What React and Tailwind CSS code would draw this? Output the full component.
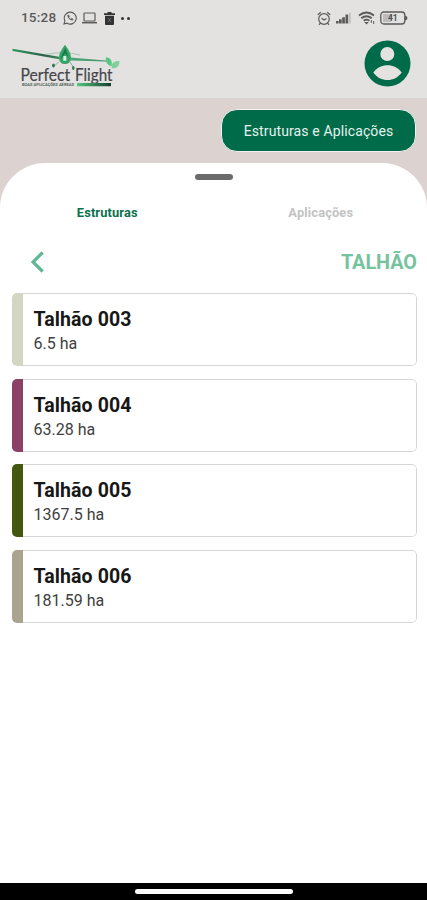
const fields = [
  { name: 'Talhão 003', area: '6.5 ha', bar: 'bg-[#d3d6c3]' },
  { name: 'Talhão 004', area: '63.28 ha', bar: 'bg-[#8b4165]' },
  { name: 'Talhão 005', area: '1367.5 ha', bar: 'bg-[#43570f]' },
  { name: 'Talhão 006', area: '181.59 ha', bar: 'bg-[#aaa390]' },
];

function StatusBar() {
  return (
    <div className="flex h-9 items-center justify-between pl-[21px] pr-[19px] text-[#5a5a5a]">
      <div className="flex items-center">
        <span className="w-[42px] text-[13.5px] font-medium leading-none tracking-[0.2px]">15:28</span>
        <svg className="h-[14px] w-[14px]" viewBox="0 0 14 14" fill="none" stroke="currentColor">
          <path d="M1 13l.9-3.2A6 6 0 1 1 4.100 12.200Z" strokeWidth="1.100" />
          <path d="M4.600 4.100c-.4 2.300 2.700 5.400 5 5.200l.6-1.200-1.600-.8-.8.7C6.900 7.600 6.200 6.900 5.900 6.200l.6-.8-.7-1.500Z" fill="currentColor" strokeWidth=".3" />
        </svg>
        <svg className="ml-[5px] h-3 w-[15px]" viewBox="0 0 15 12" fill="none" stroke="currentColor">
          <rect x="2" y="1" width="11" height="8" rx=".7" strokeWidth="1.200" />
          <path d="M0 10.700h15" strokeWidth="1.500" />
        </svg>
        <svg className="ml-[7px] h-[13px] w-[11px] text-[#333333]" viewBox="0 0 11 13" fill="currentColor">
          <path d="M3.500 0h4v1.300H11V3H0V1.300h3.500ZM1 3.800h9V12a1 1 0 0 1-1 1H2a1 1 0 0 1-1-1Z" />
          <path d="M4 6l3 4M7 6l-3 4" stroke="#777" strokeWidth=".8" />
        </svg>
        <span className="ml-[6px] h-[3px] w-[3px] rounded-full bg-[#333333]" />
        <span className="ml-[3px] h-[3px] w-[3px] rounded-full bg-[#333333]" />
      </div>
      <div className="flex items-center">
        <svg className="h-[15px] w-[14px]" viewBox="0 0 14 15" fill="none" stroke="currentColor" strokeWidth="1.200">
          <circle cx="7" cy="8" r="5.300" />
          <path d="M.8 3.700L3.800 1.200M13.200 3.700l-3-2.500M4.500 7.200L7 9l2.500-1.600M3.300 12.200l-1.200 1.600M10.700 12.200l1.200 1.600" />
        </svg>
        <svg className="ml-[5px] h-3 w-4" viewBox="0 0 16 12" fill="currentColor">
          <path d="M0 9h2.600v2.500H0ZM3 7.300h2.700v4.200H3ZM6.200 5.200h2.700v6.300H6.200ZM9.500 2.500h2.700v9H9.500Z" />
          <path d="M13.200.8h1.500v10.700h-1.500Z" opacity=".3" />
        </svg>
        <svg className="ml-[6px] h-[14px] w-[18px]" viewBox="0 0 18 14" fill="none" stroke="currentColor" strokeWidth="1.900">
          <path d="M1 4.500q7.500-6 15 0M3.300 7.200q5.200-4.100 10.400 0M5.700 9.700q2.800-2.100 5.600 0" />
          <path d="M6.200 11h4.600L8.500 13.500Z" fill="currentColor" stroke="none" />
          <path d="M13.300 9v3M15.700 10v3" strokeWidth="1" />
        </svg>
        <svg className="ml-[4px] h-[14px] w-[28px]" viewBox="0 0 28 14">
          <rect x=".8" y="1" width="24" height="12" rx="3" fill="none" stroke="currentColor" strokeWidth="1.300" />
          <rect x="3" y="3" width="8" height="8" rx="1" fill="#bcbcbc" />
          <path d="M25 4.500q2.500.5 2.500 2.500T25 9.500Z" fill="currentColor" />
          <text x="12.800" y="10.200" textAnchor="middle" fontFamily="Roboto, sans-serif" fontSize="8.500" fontWeight="700" fill="#505050">41</text>
        </svg>
      </div>
    </div>
  );
}

function Logo() {
  return (
    <svg className="h-[48px] w-[110px]" viewBox="12 42 110 48" fill="none">
      <defs>
        <linearGradient id="wing" x1="12" x2="120" y1="0" y2="0" gradientUnits="userSpaceOnUse">
          <stop stopColor="#2b9a60" />
          <stop offset=".3" stopColor="#2f6048" />
          <stop offset=".55" stopColor="#4ba879" />
          <stop offset="1" stopColor="#4a8c68" />
        </linearGradient>
        <linearGradient id="strip" x1="77" x2="111" y1="0" y2="0" gradientUnits="userSpaceOnUse">
          <stop stopColor="#55c783" />
          <stop offset="1" stopColor="#143f2d" />
        </linearGradient>
      </defs>
      <path d="M12.500 48.800L59 56.700l11 .8 36 2.900v1.200L71 60.600 58 59 12.600 51Z" fill="url(#wing)" />
      <path d="M46 54.300q18-3.500 34 .7" stroke="#9dbfac" strokeWidth=".8" />
      <path d="M65 44.800c2.300 3.500 6 7.800 6 13 0 4.200-2.600 6.300-6 6.300s-6-2.200-6-6.300c0-5 3.700-9.500 6-13Z" fill="#38a568" />
      <path d="M65 47c-.8 6-3.600 7-3.800 12.300L65 53l3.500 5Z" fill="#187648" />
      <path d="M63.300 56h3v4.700h-3Z" fill="#d7f0df" />
      <path d="M59 61.500l-4 4M70 62l3.300 5" stroke="#70907e" strokeWidth=".7" />
      <ellipse cx="53.500" cy="65.500" rx="1.400" ry="2" fill="#267650" />
      <ellipse cx="73.300" cy="68" rx="1.200" ry="2" fill="#267650" />
      <path d="M106 57.300c5 .6 6.500 4 5.500 9-4.300-1.100-6.400-4.500-5.500-9Z" fill="#55c783" />
      <path d="M111.500 68c-.4-5 2.500-7.300 8-7 0 5.400-3.200 8.300-8 7Z" fill="#80cf9c" />
      <text x="20.500" y="81" fontFamily="Lato, sans-serif" fontSize="17" textLength="49.500" lengthAdjust="spacingAndGlyphs" fill="#44464a" stroke="#44464a" strokeWidth=".2">Perfect</text>
      <text x="75" y="81" fontFamily="Lato, sans-serif" fontSize="17" textLength="37.500" lengthAdjust="spacingAndGlyphs" fill="#44464a" stroke="#44464a" strokeWidth=".2">Flight</text>
      <text x="22" y="86.300" fontFamily="Roboto, sans-serif" fontSize="3.800" fontWeight="700" textLength="52" lengthAdjust="spacingAndGlyphs" fill="#53665c">BOAS APLICAÇÕES AÉREAS</text>
      <path d="M77 83h34v3.300H77Z" fill="url(#strip)" />
    </svg>
  );
}

function FieldCard({ name, area, bar }) {
  return (
    <li className="flex h-[73px] overflow-hidden rounded-[5px]">
      <span className={`w-[11px] shrink-0 ${bar}`} />
      <div className="flex-1 rounded-r-[5px] border border-l-0 border-[#d5d5d5] bg-white pl-[11px] pt-[14px]">
        <h2 className="text-[19.5px] font-bold leading-6 tracking-[0.1px] text-[#171717]">{name}</h2>
        <p className="text-[16px] leading-6 text-[#404040]">{area}</p>
      </div>
    </li>
  );
}

export default function App() {
  return (
    <div className="flex h-[900px] w-[427px] flex-col overflow-hidden bg-[#dcd3d1] font-[Roboto,sans-serif]">
      <header className="h-[98px] shrink-0 bg-[#e3e2e1]">
        <StatusBar />
        <div className="flex items-start justify-between pl-3 pr-4">
          <div className="pt-1.5"><Logo /></div>
          <svg className="mt-1 h-[47px] w-[47px]" viewBox="0 0 47 47">
            <circle cx="23.500" cy="23.500" r="23" fill="#006b49" />
            <circle cx="23.300" cy="14" r="7" fill="#e5e3e1" />
            <path d="M9.300 32.500C13 27.300 18 25.300 23.500 25.300S34 27.300 37.700 32.500C34 37.700 29 40 23.500 40S13 37.700 9.300 32.500Z" fill="#e5e3e1" />
          </svg>
        </div>
      </header>
      <div className="flex h-[65px] shrink-0 justify-end pr-[11px] pt-[11px]">
        <button className="flex h-[43px] w-[195px] items-center justify-center rounded-[16px] border border-[#f3f0ef] bg-[#006b49] pt-0.5 text-[14px] tracking-[0.12px] text-[#e4f1ec]">
          Estruturas e Aplicações
        </button>
      </div>
      <main className="flex flex-1 flex-col rounded-t-[45px] bg-white">
        <div className="flex h-[28px] justify-center pt-[11px]">
          <div className="h-[6px] w-[38px] rounded-[3px] bg-[#6b6b6b]" />
        </div>
        <nav className="grid h-[44px] grid-cols-2 items-center text-center text-[12.8px] font-bold tracking-[0.15px]">
          <span className="pl-px text-[#0b6f4c]">Estruturas</span>
          <span className="pl-px text-[#c3c3c3]">Aplicações</span>
        </nav>
        <div className="flex h-[58px] items-center justify-between pb-[5px] pl-[30px] pr-[10px]">
          <svg className="h-[22px] w-[15px]" viewBox="0 0 15 22" fill="none" stroke="#62b894" strokeWidth="3.200">
            <path d="M12.700 1.500L3 11l9.700 9.500" />
          </svg>
          <h1 className="pt-0.5 text-[19.8px] font-bold text-[#75c39d]">TALHÃO</h1>
        </div>
        <ul className="flex flex-col gap-[12.5px] pl-[11.5px] pr-[10px]">
          {fields.map((field) => (
            <FieldCard key={field.name} {...field} />
          ))}
        </ul>
      </main>
      <footer className="flex h-[17px] shrink-0 justify-center bg-black pt-[6px]">
        <div className="h-[5px] w-[158px] rounded-full bg-white" />
      </footer>
    </div>
  );
}
